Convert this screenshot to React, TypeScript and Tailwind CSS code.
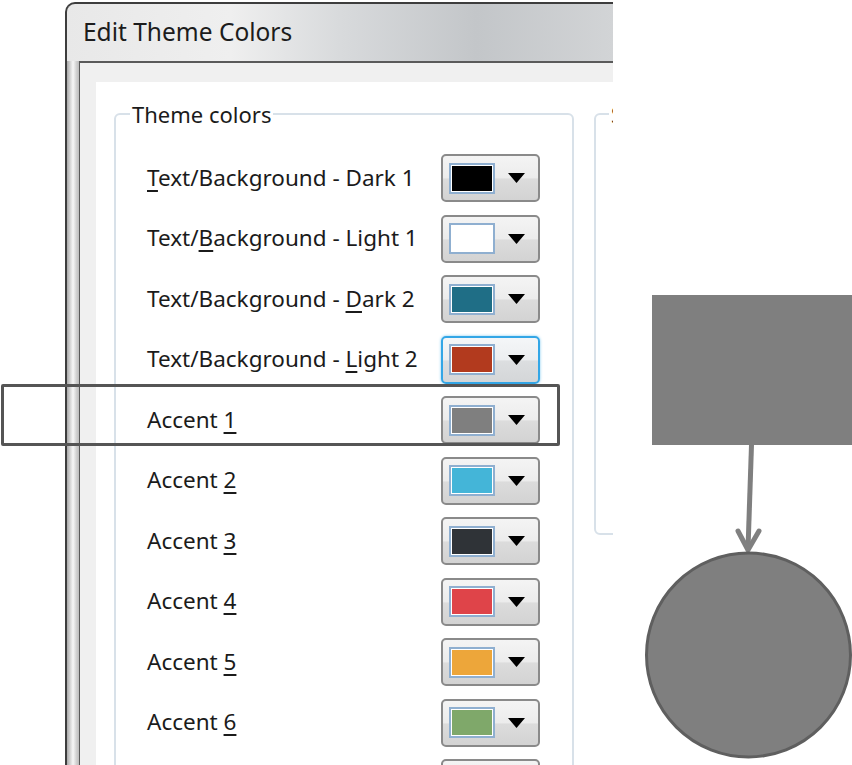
import React from 'react';

type Row = { pre: string; key: string; post: string; color: string; focused?: boolean };

const rows: Row[] = [
  { pre: '', key: 'T', post: 'ext/Background - Dark 1', color: '#000000' },
  { pre: 'Text/', key: 'B', post: 'ackground - Light 1', color: '#ffffff' },
  { pre: 'Text/Background - ', key: 'D', post: 'ark 2', color: '#1f6e86' },
  { pre: 'Text/Background - ', key: 'L', post: 'ight 2', color: '#b23a1e', focused: true },
  { pre: 'Accent ', key: '1', post: '', color: '#7f7f7f' },
  { pre: 'Accent ', key: '2', post: '', color: '#44b5d8' },
  { pre: 'Accent ', key: '3', post: '', color: '#2f3337' },
  { pre: 'Accent ', key: '4', post: '', color: '#df4449' },
  { pre: 'Accent ', key: '5', post: '', color: '#eda63a' },
  { pre: 'Accent ', key: '6', post: '', color: '#7fa86a' },
  // next row (Hyperlink) only shows the top of its button
  { pre: '', key: '', post: '', color: '#ffffff' },
];

function SwatchButton({ color, focused }: { color: string; focused?: boolean }) {
  return (
    <div
      className={
        focused
          ? 'flex h-[48px] w-[99px] shrink-0 items-center rounded-[5px] border-[2px] border-[#33a6e6] bg-[linear-gradient(to_bottom,#f4f6f8_0%,#eceef0_50%,#dcdee0_52%,#d4d6d8_100%)] pl-[6px] shadow-[0_0_3px_#7cc8f0]'
          : 'flex h-[48px] w-[99px] shrink-0 items-center rounded-[5px] border-[2px] border-[#8a8a8a] bg-[linear-gradient(to_bottom,#f4f4f4_0%,#ececec_50%,#dcdcdc_52%,#d3d3d3_100%)] pl-[6px]'
      }
    >
      <div className="h-[31px] w-[46px] border-2 border-[#8fafd0] bg-white p-[1px]">
        <div className="h-full w-full" style={{ backgroundColor: color }} />
      </div>
      <svg width="17" height="10" viewBox="0 0 17 10" className="ml-[13px]">
        <path d="M0 0H17L8.5 10Z" fill="#000" />
      </svg>
    </div>
  );
}

export default function App() {
  return (
    <div className="relative h-[765px] w-[852px] overflow-hidden bg-white font-['Noto_Sans',sans-serif]">
      <div className="flex">
        {/* dialog, cropped on the right */}
        <div className="ml-[65px] mt-[2px] flex h-[763px] w-[548px] shrink-0 flex-col overflow-hidden rounded-tl-[10px] border-l-2 border-t-2 border-[#3d3d3d] bg-[linear-gradient(to_right,#e8e8e8_0%,#efefef_30%,#d8dadc_50%,#c3c6c9_75%,#d2d4d6_100%)]">
          <div className="flex h-[57px] shrink-0 items-center pl-[16px] text-[24.5px] leading-none text-[#1c1c1c]">
            Edit Theme Colors
          </div>
          <div className="flex min-h-0 flex-1">
            {/* glass frame edge */}
            <div className="w-[12px] shrink-0 bg-[linear-gradient(to_right,#a9a9a9_0%,#d9d9d9_30%,#f7f7f7_50%,#cfcfcf_80%,#bdbdbd_100%)]" />
            <div className="flex min-w-0 flex-1 flex-col border-l border-t-2 border-[#5a5a5a] bg-[#f0f0f0] pl-[16px] pt-[19px]">
              <div className="flex min-h-0 flex-1 items-start gap-[20px] bg-white pl-[18px] pt-[21px] text-[#1b1b1b]">
                <fieldset className="m-0 h-[700px] w-[460px] shrink-0 rounded-[6px] border-2 border-[#d8e1e9] p-0 pt-[29px]">
                  <legend className="ml-[14px] px-[2px] text-[22px] leading-[22px]">Theme colors</legend>
                  {rows.map((r, i) => (
                    <div key={i} className="flex h-[60.5px] items-start">
                      <div className="flex h-[48px] w-[325px] items-center pl-[31px] text-[22.5px] leading-none">
                        <span>
                          {r.pre}
                          {r.key && <span className="underline decoration-[2px] underline-offset-[4px]">{r.key}</span>}
                          {r.post}
                        </span>
                      </div>
                      <SwatchButton color={r.color} focused={r.focused} />
                    </div>
                  ))}
                </fieldset>
                <fieldset className="m-0 h-[432px] w-[200px] shrink-0 rounded-[6px] border-2 border-[#d8e1e9] p-0">
                  <legend className="ml-[13px] px-[2px] text-[22px] leading-[22px] text-[#1b1b1b]">Sample</legend>
                </fieldset>
              </div>
            </div>
          </div>
        </div>

        {/* diagram */}
        <div className="w-[239px] shrink-0">
          <svg width="239" height="765" viewBox="0 0 239 765">
            <rect x="39" y="295" width="200" height="150" fill="#7f7f7f" />
            <line x1="138.5" y1="445" x2="135" y2="549" stroke="#7f7f7f" strokeWidth="5" />
            <polyline points="125,531 135,550 146,531" fill="none" stroke="#808080" strokeWidth="5" strokeLinecap="round" strokeLinejoin="round" />
            <circle cx="135.5" cy="655" r="102" fill="#7f7f7f" stroke="#5f5f5f" strokeWidth="3" />
          </svg>
        </div>
      </div>

      {/* selection frame laid over the Accent 1 row */}
      <div className="absolute left-[1px] top-[384px] h-[62px] w-[559px] rounded-[2px] border-[3px] border-[#555555]" />
    </div>
  );
}
